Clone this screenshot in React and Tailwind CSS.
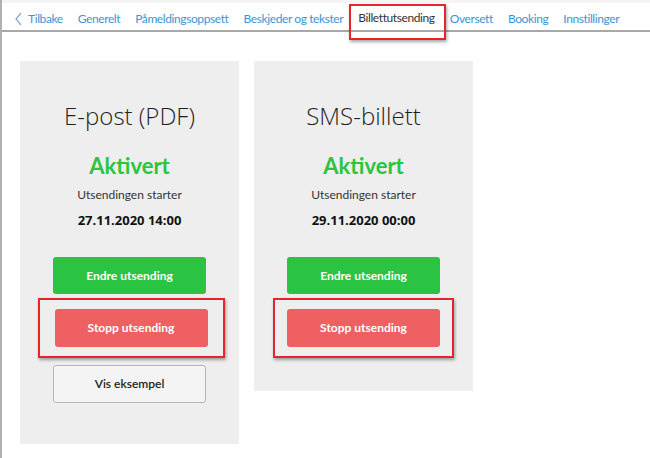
import React from "react";

const navItems = [
  "Generelt",
  "Påmeldingsoppsett",
  "Beskjeder og tekster",
  "Billettutsending",
  "Oversett",
  "Booking",
  "Innstillinger",
];

const Highlight = ({ children, className }) => (
  <div
    className={`border-2 border-[#e3262d] shadow-[1px_2px_3px_rgba(0,0,0,0.35)] ${className}`}
  >
    {children}
  </div>
);

const TicketCard = ({ title, date, showExample, highlightClass, height }) => {
  return (
    <div className={`w-[219px] ${height} bg-[#eeeeee] flex flex-col items-center`}>
      <p className="mt-[40px] text-[24px] leading-[30px] text-[#1f1f1f] font-['Open_Sans',sans-serif] font-light">
        {title}
      </p>
      <p className="mt-[21px] text-[22px] leading-[28px] font-bold text-[#2dc43f] font-['Lato',sans-serif]">
        Aktivert
      </p>
      <p className="mt-[7px] text-[12px] leading-[16px] text-[#333] font-['Lato',sans-serif]">
        Utsendingen starter
      </p>
      <p className="mt-[9px] text-[13px] leading-[16px] font-bold text-[#111] font-['Open_Sans',sans-serif]">
        {date}
      </p>
      <div className="mt-[29px] flex flex-col items-center w-full">
        <button className="w-[153px] h-[37px] rounded-[3px] bg-[#2bc442] text-white text-[12px] font-bold font-['Lato',sans-serif]">
          Endre utsending
        </button>
        <Highlight className={`mt-[4px] py-[9px] flex justify-center ${highlightClass}`}>
          <button className="w-[153px] h-[38px] rounded-[3px] bg-[#ef6063] text-white text-[12px] font-bold font-['Lato',sans-serif]">
            Stopp utsending
          </button>
        </Highlight>
        {showExample && (
          <button className="mt-[7px] w-[153px] h-[38px] rounded-[3px] bg-[#f4f4f4] border border-[#b5b5b5] text-[#222] text-[12px] font-semibold font-['Lato',sans-serif]">
            Vis eksempel
          </button>
        )}
      </div>
    </div>
  );
};

export default function App() {
  return (
    <div className="w-[650px] h-[458px] bg-white border-l-2 border-[#b0b0b0] overflow-hidden font-['Open_Sans',sans-serif]">
      <div className="h-[3px] bg-[#f4f4f4]" />
      <div className="h-[29px] border-b-2 border-[#a8a8a8] flex items-center pl-[12px] pt-[4px] text-[12px] tracking-[-0.4px] whitespace-nowrap text-[#3b95d6] font-['Lato',sans-serif]">
        <span className="flex items-center gap-[5px]">
          <svg width="9" height="14" viewBox="0 0 9 14" fill="none">
            <path d="M7 1L2 7l5 6" stroke="#8aa6c0" strokeWidth="1.2" />
          </svg>
          Tilbake
        </span>
        {navItems.map((item) =>
          item === "Billettutsending" ? (
            <Highlight key={item} className="ml-[6px] mr-[-11px] h-[36px] mt-[6px] pl-[7px] pr-[9px] flex items-center pb-[7px]">
              <span className="text-[#333]">{item}</span>
            </Highlight>
          ) : (
            <span key={item} className="ml-[15px]">
              {item}
            </span>
          )
        )}
      </div>
      <div className="flex items-start gap-[15px] pl-[18px] pt-[29px]">
        <TicketCard
          title="E-post (PDF)"
          date="27.11.2020 14:00"
          showExample
          height="h-[383px]"
          highlightClass="w-[187px] ml-[3px]"
        />
        <TicketCard
          title="SMS-billett"
          date="29.11.2020 00:00"
          height="h-[330px]"
          highlightClass="w-[181px]"
        />
      </div>
    </div>
  );
}
